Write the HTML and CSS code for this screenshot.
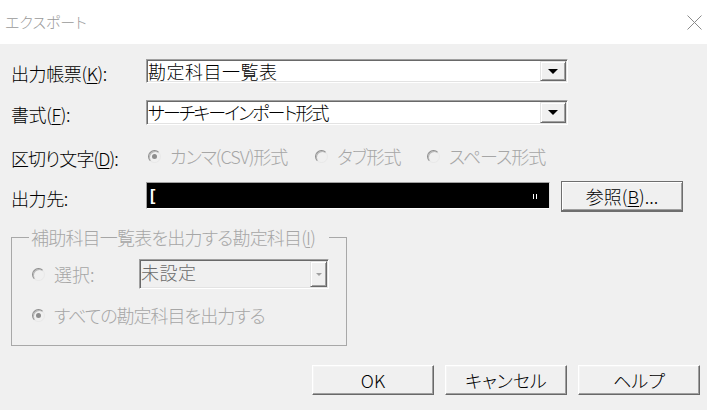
FILE: index.html
```html
<!DOCTYPE html>
<html lang="ja">
<head>
<meta charset="utf-8">
<title>エクスポート</title>
<link rel="stylesheet" href="styles.css">
</head>
<body>
<div class="window">
  <header class="titlebar">
    <span class="title">エクスポート</span>
    <svg class="close" width="15" height="15" viewBox="0 0 15 15"><path d="M0.5 0.5 L14.5 14.5 M14.5 0.5 L0.5 14.5" stroke="#8a8a8a" stroke-width="1" fill="none"/></svg>
  </header>
  <main class="content">
    <div class="row r1">
      <span class="lbl">出力帳票(<u>K</u>):</span>
      <div class="combo wide">
        <span class="combo-text">勘定科目一覧表</span>
        <span class="drop"><span class="arrow"></span></span>
      </div>
    </div>
    <div class="row r2">
      <span class="lbl">書式(<u>F</u>):</span>
      <div class="combo wide">
        <span class="combo-text kana">サーチキーインポート形式</span>
        <span class="drop"><span class="arrow"></span></span>
      </div>
    </div>
    <div class="row r3">
      <span class="lbl lbl-tight">区切り文字(<u>D</u>):</span>
      <div class="radios">
        <span class="opt o1"><span class="radio checked"></span><span class="dis">カンマ(CSV)形式</span></span>
        <span class="opt o2"><span class="radio"></span><span class="dis">タブ形式</span></span>
        <span class="opt o3"><span class="radio"></span><span class="dis">スペース形式</span></span>
      </div>
    </div>
    <div class="row r4">
      <span class="lbl">出力先:</span>
      <div class="path"><span class="caret">[</span><span class="mark"></span></div>
      <button class="btn browse">参照(<u>B</u>)...</button>
    </div>
    <fieldset class="group">
      <legend>補助科目一覧表を出力する勘定科目(<u>I</u>)</legend>
      <div class="grow g1">
        <span class="gopt"><span class="radio"></span><span class="dis">選択:</span></span>
        <div class="combo small">
          <span class="combo-text gray">未設定</span>
          <span class="drop tall"><span class="arrow light"></span></span>
        </div>
      </div>
      <div class="grow g2">
        <span class="gopt"><span class="radio checked"></span><span class="dis">すべての勘定科目を出力する</span></span>
      </div>
    </fieldset>
    <div class="actions">
      <button class="btn">OK</button>
      <button class="btn">キャンセル</button>
      <button class="btn">ヘルプ</button>
    </div>
  </main>
</div>
</body>
</html>
```
FILE: styles.css
```css
html, body {
  margin: 0;
  padding: 0;
}
body {
  background: #f0f0f0;
  font-family: "Noto Sans CJK JP", "Noto Sans", sans-serif;
  font-size: 18px;
  font-weight: 300;
  line-height: 20px;
  color: #000;
  font-feature-settings: "palt";
}
.window {
  width: 707px;
  height: 410px;
  display: flex;
  flex-direction: column;
  overflow: hidden;
}
.titlebar {
  height: 44px;
  flex: none;
  background: #fff;
  display: flex;
  align-items: center;
  justify-content: space-between;
  padding: 0 5px 0 5px;
  box-sizing: border-box;
}
.title {
  color: #9a9a9a;
  font-size: 15px;
}
.close {
  display: block;
  margin-top: 1px;
}
.content {
  flex: 1;
  display: flex;
  flex-direction: column;
  padding: 15px 0 0 11px;
}
.row {
  display: flex;
  align-items: center;
}
u {
  text-decoration: underline;
  text-underline-offset: 2px;
  text-decoration-thickness: 1px;
}
.lbl {
  width: 135px;
  flex: none;
  padding-top: 3px;
  letter-spacing: -0.4px;
}
.lbl-tight { letter-spacing: -0.9px; }
.r1 { height: 24px; }
.r2 { height: 25px; margin-top: 17px; }
.r3 { height: 24px; margin-top: 19px; }
.r4 { height: 31px; margin-top: 13px; align-items: flex-start; }
.r4 .lbl { padding-top: 7px; }

.combo {
  box-sizing: border-box;
  display: flex;
  align-items: stretch;
  background: #fff;
  border: 1px solid;
  border-color: #a0a0a0 #fff #fff #a0a0a0;
  box-shadow: inset 1px 1px #696969, inset -1px -1px #e3e3e3;
  padding: 1px;
}
.combo.wide {
  width: 422px;
  height: 100%;
}
.combo-text {
  flex: 1;
  padding-left: 0;
  line-height: 20px;
  white-space: nowrap;
  letter-spacing: 0.5px;
}
.combo-text.kana { letter-spacing: -1.9px; }
.drop {
  width: 26px;
  flex: none;
  box-sizing: border-box;
  background: #f0f0f0;
  border: 1px solid;
  border-color: #e3e3e3 #696969 #696969 #e3e3e3;
  box-shadow: inset 1px 1px #fff, inset -1px -1px #a0a0a0;
  display: flex;
  align-items: center;
  justify-content: center;
}
.arrow {
  width: 0;
  height: 0;
  border-left: 5px solid transparent;
  border-right: 5px solid transparent;
  border-top: 5px solid #000;
}
.arrow.light {
  border-left-width: 3px;
  border-right-width: 3px;
  border-top: 3px solid #a0a0a0;
}

.radios {
  display: flex;
  align-items: center;
  padding-left: 2px;
}
.opt, .gopt {
  display: flex;
  align-items: center;
}
.opt .dis { letter-spacing: -1px; }
.o1 { width: 167px; }
.o2 { width: 112px; }
.radio {
  width: 13px;
  height: 13px;
  box-sizing: border-box;
  border-radius: 50%;
  border: 1px solid;
  border-color: #8d8d8d #e8e8e8 #e8e8e8 #8d8d8d;
  background: #f0f0f0;
  box-shadow: inset 1px 1px #b8b8b8;
  margin-right: 9px;
  display: flex;
  align-items: center;
  justify-content: center;
  flex: none;
}
.radio.checked::after {
  content: "";
  width: 5px;
  height: 5px;
  border-radius: 50%;
  background: #8d8d8d;
}
.dis {
  color: #a6a6a6;
  white-space: nowrap;
}

.path {
  box-sizing: border-box;
  width: 404px;
  height: 27px;
  margin-top: 1px;
  background: #000;
  border: 1px solid;
  border-color: #a0a0a0 #e3e3e3 #fff #a0a0a0;
  display: flex;
  align-items: center;
  justify-content: space-between;
  padding: 0 12px 0 3px;
}
.caret {
  color: #fff;
  font-size: 16px;
  font-family: "Liberation Sans", sans-serif;
  font-weight: bold;
}
.mark {
  width: 4px;
  height: 5px;
  border-left: 1px solid #fff;
  border-right: 1px solid #fff;
  box-sizing: border-box;
  background: #000;
  margin-top: 2px;
}

.btn {
  font: inherit;
  font-feature-settings: "palt";
  color: #000;
  width: 122px;
  height: 30px;
  box-sizing: border-box;
  background: #f0f0f0;
  border: 1px solid;
  border-color: #fff #696969 #696969 #fff;
  box-shadow: inset -1px -1px #a0a0a0, inset 1px 1px #f4f4f4;
  padding: 0;
  margin: 0;
  line-height: 20px;
}
.btn.browse {
  margin-left: 11px;
  height: 31px;
  border: 1px solid #6e6e6e;
  border-bottom-width: 2px;
  box-shadow: inset 1px 1px #fff, inset -1px -1px #a0a0a0;
}

.group {
  margin: 15px 0 0 0;
  width: 336px;
  box-sizing: border-box;
  border: 1px solid #a8a8a8;
  padding: 12px 0 19px 20px;
  min-width: 0;
}
.group legend {
  color: #a6a6a6;
  margin-left: -3px;
  padding: 0 14px 0 2px;
  line-height: 20px;
  white-space: nowrap;
  letter-spacing: -0.8px;
}
.grow {
  display: flex;
  align-items: center;
}
.g1 { height: 30px; }
.g2 { height: 22px; margin-top: 15px; }
.g2 .dis { letter-spacing: -1px; }
.g1 .gopt { width: 107px; }
.combo.small {
  width: 190px;
  height: 30px;
  background: #f0f0f0;
}
.combo-text.gray {
  color: #6a6a6a;
  padding-top: 1px;
}
.drop.tall {
  width: 17px;
}

.actions {
  display: flex;
  justify-content: flex-end;
  gap: 11px;
  margin-top: 19px;
  padding-right: 7px;
}
```
